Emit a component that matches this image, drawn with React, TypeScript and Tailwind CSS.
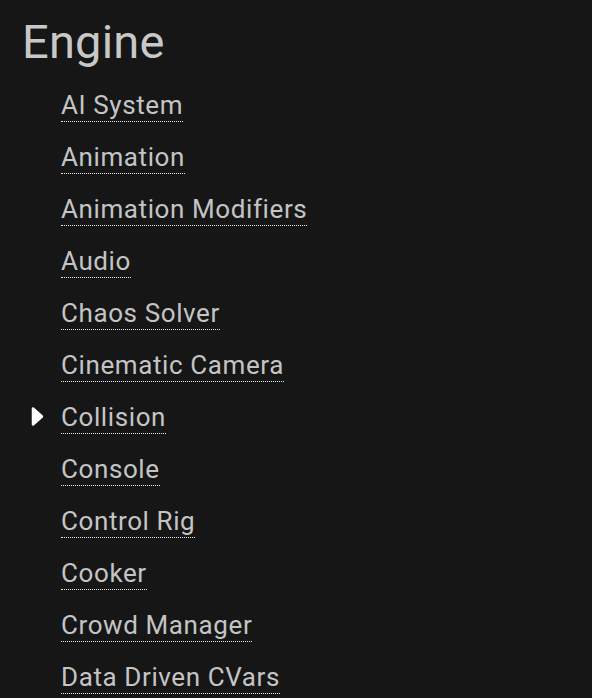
import React from "react";

const items = [
  "AI System",
  "Animation",
  "Animation Modifiers",
  "Audio",
  "Chaos Solver",
  "Cinematic Camera",
  "Collision",
  "Console",
  "Control Rig",
  "Cooker",
  "Crowd Manager",
  "Data Driven CVars",
];

export default function App() {
  return (
    <div
      className="w-[592px] h-[698px] overflow-hidden bg-[#161616] text-[#c4c4c4]"
      style={{ fontFamily: "Roboto, 'Noto Sans', sans-serif" }}
    >
      <h1 className="ml-[22px] mt-[15px] text-[47px] leading-[54px] tracking-[0.2px] text-[#c8c8c8]">Engine</h1>
      <ul className="mt-[21px] flex flex-col gap-5 pl-[61px]">
        {items.map((it) => (
          <li key={it} className="relative">
            {it === "Collision" && (
              <svg
                className="absolute left-[-30px] top-[4px]"
                width="13"
                height="21"
                viewBox="0 0 13 21"
              >
                <path
                  d="M2 2.5 L11 10.5 L2 18.5 Z"
                  fill="#ffffff"
                  stroke="#ffffff"
                  strokeWidth="2.5"
                  strokeLinejoin="round"
                />
              </svg>
            )}
            <span className="inline-block text-[26px] leading-[30px] tracking-[0.6px] pb-px border-b border-dotted border-[#e8e8e8]">
              {it}
            </span>
          </li>
        ))}
      </ul>
    </div>
  );
}
